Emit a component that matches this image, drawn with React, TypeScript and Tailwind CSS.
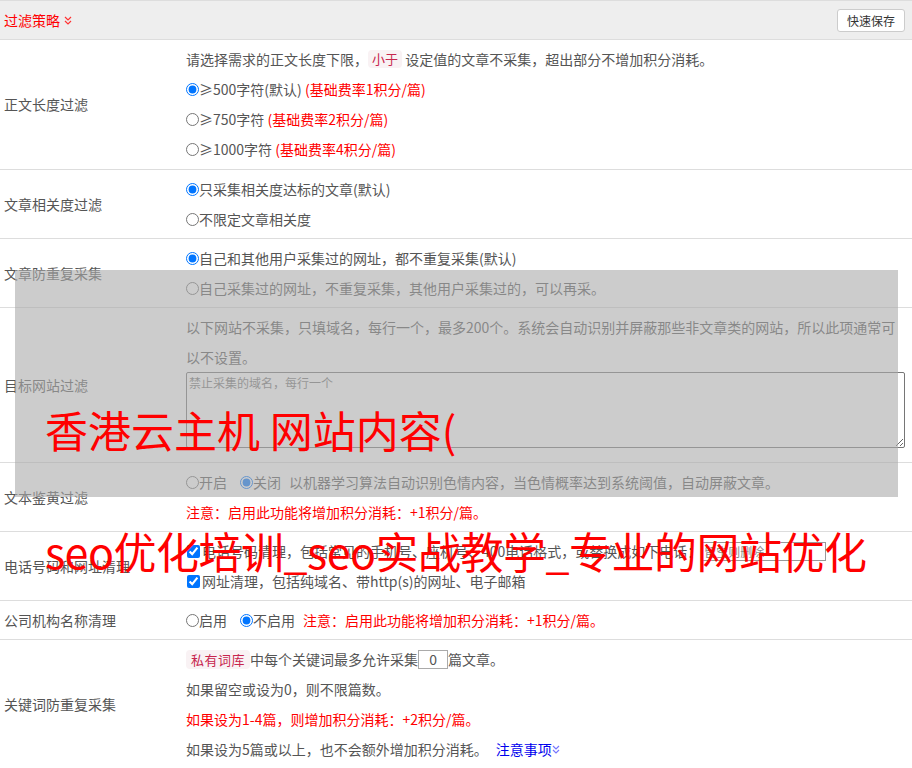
import React from "react";

function DoubleChevron({ color }: { color: string }) {
  return (
    <svg width="8" height="9" viewBox="0 0 8 9" className="inline-block">
      <polyline points="1,1 4,4 7,1" fill="none" stroke={color} strokeWidth="1.2" />
      <polyline points="1,5 4,8 7,5" fill="none" stroke={color} strokeWidth="1.2" />
    </svg>
  );
}

function Radio({ checked }: { checked?: boolean }) {
  return (
    <input
      type="radio"
      defaultChecked={checked}
      className="m-0 h-[13px] w-[13px] shrink-0"
    />
  );
}

function Check() {
  return (
    <input type="checkbox" defaultChecked className="m-0 ml-px h-[13px] w-[13px] shrink-0" />
  );
}

function Row({
  label,
  children,
  pad = "py-1",
}: {
  label: string;
  children: React.ReactNode;
  pad?: string;
}) {
  return (
    <div className="flex border-b border-[#ddd]">
      <div className="flex w-[186px] shrink-0 items-center pl-1">{label}</div>
      <div className={`min-w-0 flex-1 pr-[7px] leading-[30px] ${pad}`}>{children}</div>
    </div>
  );
}

export default function App() {
  return (
    <div className="relative h-[768px] w-[912px] overflow-hidden bg-white font-['Noto_Sans_CJK_SC',sans-serif] text-[14px] text-[#555]">
      {/* header */}
      <div className="flex h-[40px] items-center justify-between border-y border-[#ddd] bg-[#eee] pl-1 pr-[7px]">
        <div className="flex items-center gap-[4px] text-[#f00]">
          <span>过滤策略</span>
          <DoubleChevron color="#ff3333" />
        </div>
        <button className="h-[23px] w-[68px] rounded-[3px] border border-[#ccc] bg-white text-[12px] leading-[21px] text-[#333]">
          快速保存
        </button>
      </div>

      <Row label="正文长度过滤" pad="pt-[4px] pb-[5px]">
        <div className="flex items-center">
          <span>请选择需求的正文长度下限，</span>
          <span className="inline-block rounded-[4px] bg-[#f9f2f4] px-[4px] text-[13px] leading-[18px] text-[#c7254e]">
            小于
          </span>
          <span>&nbsp;设定值的文章不采集，超出部分不增加积分消耗。</span>
        </div>
        <div className="flex items-center">
          <Radio checked />
          <span>≥500字符(默认)&nbsp;</span>
          <span className="text-[#f00]">(基础费率1积分/篇)</span>
        </div>
        <div className="flex items-center">
          <Radio />
          <span>≥750字符&nbsp;</span>
          <span className="text-[#f00]">(基础费率2积分/篇)</span>
        </div>
        <div className="flex items-center">
          <Radio />
          <span>≥1000字符&nbsp;</span>
          <span className="text-[#f00]">(基础费率4积分/篇)</span>
        </div>
      </Row>

      <Row label="文章相关度过滤">
        <div className="flex items-center">
          <Radio checked />
          <span>只采集相关度达标的文章(默认)</span>
        </div>
        <div className="flex items-center">
          <Radio />
          <span>不限定文章相关度</span>
        </div>
      </Row>

      <Row label="文章防重复采集">
        <div className="flex items-center">
          <Radio checked />
          <span>自己和其他用户采集过的网址，都不重复采集(默认)</span>
        </div>
        <div className="flex items-center">
          <Radio />
          <span>自己采集过的网址，不重复采集，其他用户采集过的，可以再采。</span>
        </div>
      </Row>

      <Row label="目标网站过滤">
        <div>
          以下网站不采集，只填域名，每行一个，最多200个。系统会自动识别并屏蔽那些非文章类的网站，所以此项通常可以不设置。
        </div>
        <textarea
          placeholder="禁止采集的域名，每行一个"
          className="mb-[10px] block h-[76px] w-full rounded-[2px] border border-[#767676] bg-white px-[2px] py-[2px] text-[12px] leading-[16px] text-[#555] placeholder:text-[#777]"
        />
      </Row>

      <Row label="文本鉴黄过滤">
        <div className="flex items-center">
          <Radio />
          <span className="mr-[13px]">开启</span>
          <Radio checked />
          <span className="mr-[8px]">关闭</span>
          <span>以机器学习算法自动识别色情内容，当色情概率达到系统阈值，自动屏蔽文章。</span>
        </div>
        <div className="text-[#f00]">注意：启用此功能将增加积分消耗：+1积分/篇。</div>
      </Row>

      <Row label="电话号码和网址清理">
        <div className="flex items-center">
          <Check />
          <span className="ml-[2px]">电话号码清理，包括常见的手机号、座机号、400电话格式，或替换成如下电话：</span>
          <input
            type="text"
            placeholder="留空则删除"
            className="h-[19px] w-[125px] border border-[#999] px-[2px] text-[12px] leading-[17px] placeholder:text-[#888]"
          />
        </div>
        <div className="flex items-center">
          <Check />
          <span className="ml-[2px]">网址清理，包括纯域名、带http(s)的网址、电子邮箱</span>
        </div>
      </Row>

      <Row label="公司机构名称清理">
        <div className="flex items-center">
          <Radio />
          <span className="mr-[13px]">启用</span>
          <Radio checked />
          <span className="mr-[8px]">不启用</span>
          <span className="text-[#f00]">注意：启用此功能将增加积分消耗：+1积分/篇。</span>
        </div>
      </Row>

      <Row label="关键词防重复采集">
        <div className="flex items-center">
          <span className="inline-block rounded-[4px] bg-[#f9f2f4] px-[5px] text-[13px] leading-[19px] tracking-[0.5px] text-[#c7254e]">
            私有词库
          </span>
          <span>中每个关键词最多允许采集</span>
          <input
            type="text"
            defaultValue="0"
            className="h-[19px] w-[30px] border border-[#aaa] text-center text-[14px] leading-[17px] text-[#555]"
          />
          <span>篇文章。</span>
        </div>
        <div>如果留空或设为0，则不限篇数。</div>
        <div className="text-[#f00]">如果设为1-4篇，则增加积分消耗：+2积分/篇。</div>
        <div className="flex items-center">
          <span>如果设为5篇或以上，也不会额外增加积分消耗。</span>
          <span className="ml-[8px] text-[#0000ee]">注意事项</span>
          <DoubleChevron color="#7777ff" />
        </div>
      </Row>

      {/* overlay */}
      <div className="absolute left-[15px] top-[270px] h-[227px] w-[883px] bg-[rgba(170,170,170,0.6)]" />
      <div className="absolute left-[45px] top-[408px] whitespace-nowrap text-[43px] leading-none text-[#f00]">
        香港云主机 网站内容(
      </div>
      <div className="absolute left-[45px] top-[529px] whitespace-nowrap text-[43px] leading-none tracking-[-0.5px] text-[#f00]">
        seo优化培训_seo实战教学_专业的网站优化
      </div>
    </div>
  );
}
